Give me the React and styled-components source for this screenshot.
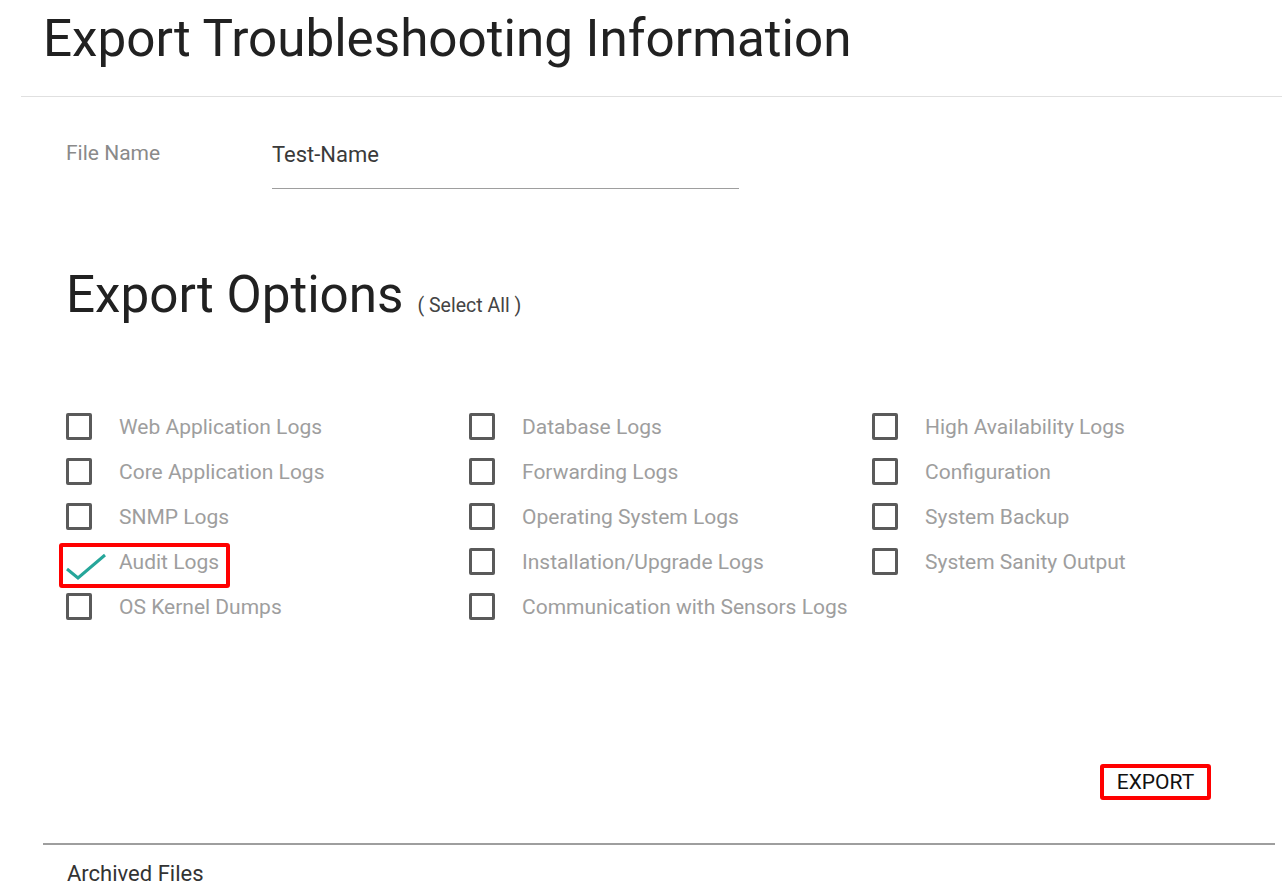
import React from 'react';
import styled, { createGlobalStyle } from 'styled-components';

const GlobalStyle = createGlobalStyle`
  body {
    margin: 0;
    background: #fff;
    font-family: Roboto, "Liberation Sans", Arial, sans-serif;
  }
`;

const Page = styled.div`
  width: 1282px;
  height: 890px;
  overflow: hidden;
`;

const Header = styled.header`
  margin-left: 21px;
  height: 96px;
  border-bottom: 1px solid #e0e0e0;
  box-sizing: content-box;
`;

const Title = styled.h1`
  margin: 0;
  padding: 9px 0 0 22px;
  font-size: 51.2px;
  line-height: 60px;
  font-weight: 400;
  color: #212121;
`;

const Content = styled.main`
  padding-left: 66px;
`;

const FileRow = styled.div`
  display: flex;
  align-items: flex-start;
  margin-top: 41px;
`;

const FieldLabel = styled.label`
  width: 206px;
  font-size: 21px;
  line-height: 30px;
  color: #8a8a8a;
`;

const TextInput = styled.input`
  width: 467px;
  border: 0;
  border-bottom: 1px solid #9e9e9e;
  outline: none;
  padding: 0 0 16px 0;
  font-family: inherit;
  font-size: 22px;
  line-height: 34px;
  color: #3a3a3a;
  background: transparent;
`;

const SectionTitle = styled.h2`
  display: flex;
  align-items: baseline;
  gap: 14px;
  margin: 78px 0 0 0;
  font-size: 51.2px;
  line-height: 56px;
  font-weight: 400;
  color: #212121;
`;

const SelectAll = styled.span`
  font-size: 19.5px;
  color: #444;
`;

const OptionsGrid = styled.div`
  display: grid;
  grid-template-columns: repeat(3, 403px);
  grid-auto-flow: column;
  grid-template-rows: repeat(5, 45px);
  margin-top: 70px;
`;

const Option = styled.label`
  position: relative;
  display: flex;
  align-items: center;
  gap: 27px;
  height: 45px;
  width: fit-content;
`;

const Box = styled.span`
  position: relative;
  flex: none;
  width: 26px;
  height: 27px;
  box-sizing: border-box;
  border: ${props => (props.checked ? '0' : '3px solid #5a5a5a')};
  border-radius: 2px;
`;

const Tick = styled.svg`
  position: absolute;
  left: 0;
  top: 7px;
  overflow: visible;
`;

const OptionText = styled.span`
  font-size: 21px;
  color: #9e9e9e;
  white-space: nowrap;
`;

const Highlight = styled.span`
  position: absolute;
  left: -7px;
  top: 4px;
  width: 171px;
  height: 45px;
  box-sizing: border-box;
  border: 4px solid #ff0000;
  border-radius: 3px;
  pointer-events: none;
`;

const Actions = styled.div`
  display: flex;
  justify-content: flex-end;
  margin-top: 135px;
  padding-right: 71px;
`;

const ExportButton = styled.button`
  width: 111px;
  height: 36px;
  border: 4px solid #ff0000;
  border-radius: 3px;
  background: #fff;
  font-family: inherit;
  font-size: 21px;
  color: #111;
  text-transform: uppercase;
  padding: 0;
`;

const Divider = styled.hr`
  margin: 43px 7px 0 43px;
  border: 0;
  border-top: 2px solid #9e9e9e;
`;

const Archived = styled.div`
  padding: 14px 0 0 67px;
  font-size: 22px;
  line-height: 30px;
  color: #333;
`;

const options = [
  { label: 'Web Application Logs' },
  { label: 'Core Application Logs' },
  { label: 'SNMP Logs' },
  { label: 'Audit Logs', checked: true, highlighted: true },
  { label: 'OS Kernel Dumps' },
  { label: 'Database Logs' },
  { label: 'Forwarding Logs' },
  { label: 'Operating System Logs' },
  { label: 'Installation/Upgrade Logs' },
  { label: 'Communication with Sensors Logs' },
  { label: 'High Availability Logs' },
  { label: 'Configuration' },
  { label: 'System Backup' },
  { label: 'System Sanity Output' },
];

export default function App() {
  return (
    <Page>
      <GlobalStyle />
      <Header>
        <Title>Export Troubleshooting Information</Title>
      </Header>
      <Content>
        <FileRow>
          <FieldLabel>File Name</FieldLabel>
          <TextInput defaultValue="Test-Name" />
        </FileRow>
        <SectionTitle>
          Export Options <SelectAll>( Select All )</SelectAll>
        </SectionTitle>
        <OptionsGrid>
          {options.map(o => (
            <Option key={o.label}>
              <Box checked={o.checked}>
                {o.checked && (
                  <Tick width="40" height="26" viewBox="0 0 40 26">
                    <polyline
                      points="1,14 12,23 39,0"
                      fill="none"
                      stroke="#26a69a"
                      strokeWidth="3"
                    />
                  </Tick>
                )}
              </Box>
              <OptionText>{o.label}</OptionText>
              {o.highlighted && <Highlight />}
            </Option>
          ))}
        </OptionsGrid>
      </Content>
      <Actions>
        <ExportButton>Export</ExportButton>
      </Actions>
      <Divider />
      <Archived>Archived Files</Archived>
    </Page>
  );
}
